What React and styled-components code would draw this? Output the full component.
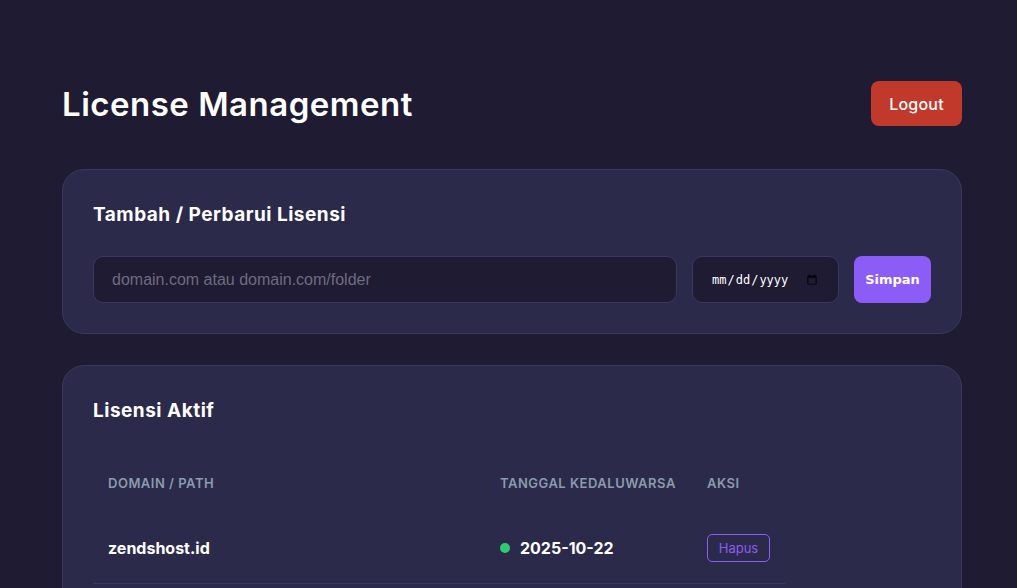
import React from "react";
import styled, { createGlobalStyle } from "styled-components";

const Global = createGlobalStyle`
  html, body { margin: 0; padding: 0; background: #1e1b33; }
  body { font-family: Inter, "Open Sans", sans-serif; color: #fff; }
  * { box-sizing: border-box; }
`;

const Page = styled.div`
  padding: 81px 55px 0 62px;
  min-height: 588px;
`;

const Container = styled.div`
  width: 900px;
  display: flex;
  flex-direction: column;
  gap: 31px;
`;

const Header = styled.header`
  display: flex;
  align-items: center;
  justify-content: space-between;
  margin-bottom: 12px;
`;

const Title = styled.h1`
  margin: 0;
  font-size: 33px;
  font-weight: 600;
  letter-spacing: 0.5px;
  color: #fff;
`;

const LogoutButton = styled.button`
  height: 45px;
  width: 91px;
  border: none;
  border-radius: 8px;
  background: #c0392b;
  color: #fff;
  font-family: Inter, sans-serif;
  font-size: 16px;
  font-weight: 500;
  letter-spacing: 0.2px;
  cursor: pointer;
`;

const Card = styled.section`
  background: #2c2a4b;
  border: 1px solid #3b3860;
  border-radius: 22px;
  padding: 30px;
`;

const CardTitle = styled.h2`
  margin: 0;
  font-size: 19px;
  font-weight: 700;
  letter-spacing: 0.5px;
  line-height: 30px;
  color: #fff;
`;

const FormRow = styled.div`
  display: flex;
  align-items: stretch;
  gap: 15px;
  margin-top: 26px;
`;

const TextInput = styled.input`
  flex: 1;
  height: 47px;
  background: #1e1b33;
  border: 1px solid #3b3860;
  border-radius: 10px;
  padding: 0 18px;
  color: #fff;
  font-family: "Liberation Sans", Arial, sans-serif;
  font-size: 16px;
  outline: none;
  &::placeholder { color: #6e6c80; }
`;

const DateInput = styled.input`
  width: 147px;
  height: 47px;
  background: #1e1b33;
  border: 1px solid #3b3860;
  border-radius: 10px;
  padding: 0 18px;
  color: #fff;
  font-family: "DejaVu Sans Mono", monospace;
  font-size: 12px;
  color-scheme: light;
  outline: none;
  &::-webkit-datetime-edit { color: #fff; }
`;

const SaveButton = styled.button`
  width: 77px;
  height: 47px;
  border: none;
  border-radius: 8px;
  background: #8b5cf6;
  color: #fff;
  font-family: "DejaVu Sans", sans-serif;
  font-size: 13px;
  font-weight: 700;
  cursor: pointer;
`;

const Table = styled.table`
  border-collapse: collapse;
  margin-top: 32px;
`;

const Th = styled.th`
  text-align: left;
  padding: 15px 15px;
  font-size: 13px;
  font-weight: 600;
  letter-spacing: 0.5px;
  line-height: 20px;
  text-transform: uppercase;
  color: #8a9bab;
  width: ${(p) => p.$w || "auto"};
`;

const Tr = styled.tr`
  border-bottom: 1px solid #3b3860;
`;

const Td = styled.td`
  padding: 25px 15px 21px;
  font-size: 16px;
  font-weight: 700;
  line-height: 28px;
  color: #fff;
  vertical-align: middle;
`;

const DateCell = styled.span`
  display: inline-flex;
  align-items: center;
  gap: 10px;
`;

const Dot = styled.span`
  width: 10px;
  height: 10px;
  border-radius: 50%;
  background: #2ecc71;
`;

const DeleteButton = styled.button`
  height: 28px;
  width: 63px;
  background: transparent;
  border: 1px solid #8b5cf6;
  border-radius: 5px;
  color: #8b5cf6;
  font-family: Inter, sans-serif;
  font-size: 13px;
  font-weight: 400;
  cursor: pointer;
  display: block;
`;

export default function App() {
  return (
    <>
      <Global />
      <Page>
        <Container>
          <Header>
            <Title>License Management</Title>
            <LogoutButton>Logout</LogoutButton>
          </Header>
          <Card>
            <CardTitle>Tambah / Perbarui Lisensi</CardTitle>
            <FormRow>
              <TextInput placeholder="domain.com atau domain.com/folder" />
              <DateInput type="date" />
              <SaveButton>Simpan</SaveButton>
            </FormRow>
          </Card>
          <Card>
            <CardTitle>Lisensi Aktif</CardTitle>
            <Table>
              <thead>
                <tr>
                  <Th $w="392px">Domain / Path</Th>
                  <Th $w="207px">Tanggal Kedaluwarsa</Th>
                  <Th $w="93px">Aksi</Th>
                </tr>
              </thead>
              <tbody>
                <Tr>
                  <Td>zendshost.id</Td>
                  <Td>
                    <DateCell>
                      <Dot />
                      2025-10-22
                    </DateCell>
                  </Td>
                  <Td>
                    <DeleteButton>Hapus</DeleteButton>
                  </Td>
                </Tr>
              </tbody>
            </Table>
          </Card>
        </Container>
      </Page>
    </>
  );
}
